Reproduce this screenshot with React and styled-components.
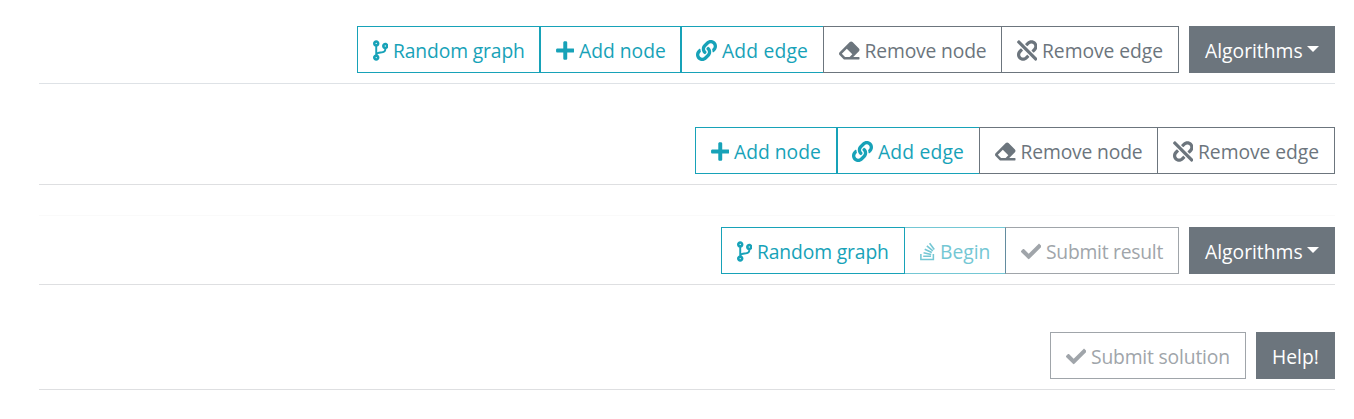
import React from "react";
import styled, { createGlobalStyle } from "styled-components";
import { FaCodeBranch, FaPlus, FaLink, FaEraser, FaUnlink, FaStackOverflow, FaCheck } from "react-icons/fa";

const GlobalStyle = createGlobalStyle`
  *, *::before, *::after { box-sizing: border-box; }
  body { margin: 0; background: #fff; }
`;

const Page = styled.main`
  width: 1354px;
  height: 419px;
  overflow: hidden;
  padding: 26px 17px 0 39px;
  font-family: "Segoe UI", "Open Sans", "Noto Sans", sans-serif;
  font-size: 19.3px;
  line-height: 30px;
`;

const Toolbar = styled.section`
  display: flex;
  justify-content: flex-end;
  gap: 10px;
  width: ${(p) => (p.$wide ? 1298 : 1296)}px;
  height: ${(p) => p.$height || 58}px;
  padding-right: ${(p) => (p.$wide ? 2 : 0)}px;
  padding-top: ${(p) => (p.$topLine ? 11 : 0)}px;
  margin-bottom: ${(p) => p.$gap || 0}px;
  border-top: ${(p) => (p.$topLine ? "1px solid #fafafa" : "0")};
  border-bottom: 1px solid ${(p) => p.$line || "#dedfe1"};
`;

const ButtonGroup = styled.div`
  display: flex;
`;

const tones = {
  info: "#17a2b8",
  secondary: "#6c757d",
  infoMuted: "#74c7d4",
  secondaryMuted: "#a0a5aa",
};

const Button = styled.button`
  display: flex;
  align-items: center;
  width: ${(p) => p.$width}px;
  height: 47px;
  margin: 0;
  padding: 3px 0 0 ${(p) => p.$inset || 15}px;
  border: 1px solid ${(p) => tones[p.$tone]};
  border-right-width: ${(p) => (p.$open ? 0 : 1)}px;
  border-left-width: ${(p) => (p.$joined ? 0 : 1)}px;
  border-left-color: ${(p) => p.$edge || tones[p.$tone]};
  border-radius: 0;
  background: transparent;
  color: ${(p) => tones[p.$tone]};
  font: inherit;
  white-space: nowrap;

  svg {
    flex: none;
    width: ${(p) => p.$icon}px;
    height: 21px;
    margin: 0 5px 1px 0;
  }
`;

const SolidButton = styled(Button)`
  background: #6c757d;
  border-color: #6c757d;
  color: #fff;
`;

const Label = styled.span`
  letter-spacing: ${(p) => p.$track || 0}px;
`;

const Caret = styled.i`
  margin: 0 0 4px 4px;
  border-top: 6px solid;
  border-right: 6px solid transparent;
  border-left: 6px solid transparent;
`;

const RandomGraph = (props) => (
  <Button $tone="info" $icon={15.5} $inset={14.5} {...props}><FaCodeBranch /><Label $track={-0.13}>Random graph</Label></Button>
);
const AddNode = (props) => (
  <Button $tone="info" $icon={18.5} $inset={14.5} {...props}><FaPlus /><Label>Add node</Label></Button>
);
const AddEdge = (props) => (
  <Button $tone="info" $icon={21} $inset={14} $width={142} $open {...props}><FaLink /><Label $track={0.17}>Add edge</Label></Button>
);
const RemoveNode = () => (
  <Button $tone="secondary" $icon={20.5} $width={178} $open><FaEraser /><Label $track={-0.15}>Remove node</Label></Button>
);
const RemoveEdge = () => (
  <Button $tone="secondary" $icon={20.5} $inset={14.5} $width={178}><FaUnlink /><Label $track={-0.05}>Remove edge</Label></Button>
);
const Algorithms = () => (
  <SolidButton $tone="secondary" $width={146}><Label>Algorithms</Label><Caret /></SolidButton>
);

export default function App() {
  return (
    <>
      <GlobalStyle />
      <Page>
        <Toolbar $gap={43} $line="#dee2e6">
          <ButtonGroup>
            <RandomGraph $width={183} />
            <AddNode $width={141} />
            <AddEdge />
            <RemoveNode />
            <RemoveEdge />
          </ButtonGroup>
          <Algorithms />
        </Toolbar>
        <Toolbar $wide $gap={30}>
          <ButtonGroup>
            <AddNode $width={142} />
            <AddEdge />
            <RemoveNode />
            <RemoveEdge />
          </ButtonGroup>
        </Toolbar>
        <Toolbar $topLine $height={70} $gap={47}>
          <ButtonGroup>
            <RandomGraph $width={184} />
            <Button $tone="infoMuted" $icon={15} $width={100} $joined $open disabled>
              <FaStackOverflow /><Label>Begin</Label>
            </Button>
            <Button $tone="secondaryMuted" $edge="#638c9f" $icon={20.5} $inset={14.5} $width={174} disabled>
              <FaCheck /><Label $track={-0.25}>Submit result</Label>
            </Button>
          </ButtonGroup>
          <Algorithms />
        </Toolbar>
        <Toolbar>
          <Button $tone="secondaryMuted" $icon={20.5} $inset={14.5} $width={196} disabled>
            <FaCheck /><Label $track={-0.17}>Submit solution</Label>
          </Button>
          <SolidButton $tone="secondary" $width={79}><Label>Help!</Label></SolidButton>
        </Toolbar>
      </Page>
    </>
  );
}
